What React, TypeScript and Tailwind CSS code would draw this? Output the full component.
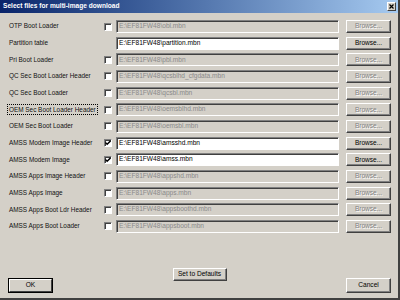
const ROWS = [
  { label: "OTP Boot Loader", path: "E:\\EF81FW48\\obl.mbn", check: true, on: false },
  { label: "Partition table", path: "E:\\EF81FW48\\partition.mbn", check: false, on: true },
  { label: "Pri Boot Loader", path: "E:\\EF81FW48\\pbl.mbn", check: true, on: false },
  { label: "QC Sec Boot Loader Header", path: "E:\\EF81FW48\\qcsblhd_cfgdata.mbn", check: true, on: false },
  { label: "QC Sec Boot Loader", path: "E:\\EF81FW48\\qcsbl.mbn", check: true, on: false },
  { label: "OEM Sec Boot Loader Header", path: "E:\\EF81FW48\\oemsblhd.mbn", check: true, on: false, focus: true },
  { label: "OEM Sec Boot Loader", path: "E:\\EF81FW48\\oemsbl.mbn", check: true, on: false },
  { label: "AMSS Modem Image Header", path: "E:\\EF81FW48\\amsshd.mbn", check: true, on: true },
  { label: "AMSS Modem Image", path: "E:\\EF81FW48\\amss.mbn", check: true, on: true },
  { label: "AMSS Apps Image Header", path: "E:\\EF81FW48\\appshd.mbn", check: true, on: false },
  { label: "AMSS Apps Image", path: "E:\\EF81FW48\\apps.mbn", check: true, on: false },
  { label: "AMSS Apps Boot Ldr Header", path: "E:\\EF81FW48\\appsboothd.mbn", check: true, on: false },
  { label: "AMSS Apps Boot Loader", path: "E:\\EF81FW48\\appsboot.mbn", check: true, on: false },
];

const FONT = { fontFamily: '"Liberation Sans", Arial, sans-serif' };

const RAISED =
  "border border-t-white border-l-white border-b-[#404040] border-r-[#404040] shadow-[inset_-1px_-1px_0_#808080]";
const SUNKEN =
  "border border-t-[#808080] border-l-[#808080] border-b-white border-r-white shadow-[inset_1px_1px_0_#404040]";

function Checkbox({ on }: { on: boolean }) {
  return (
    <div className={`w-[8px] h-[8px] bg-white flex items-center justify-center shrink-0 ${SUNKEN}`}>
      {on && (
        <svg width="6" height="6" viewBox="0 0 7 7">
          <path d="M0.5 3 L2.5 5 L6.5 1" stroke="#000" strokeWidth="1.6" fill="none" />
        </svg>
      )}
    </div>
  );
}

function Browse({ on }: { on: boolean }) {
  return (
    <div
      className={`w-[45px] h-[13px] shrink-0 flex items-center justify-center text-[6.5px] leading-none ${RAISED} ${
        on ? "text-black" : "text-[#808080] [text-shadow:1px_1px_0_#fff]"
      }`}
    >
      Browse...
    </div>
  );
}

export default function App() {
  return (
    <div
      className="w-[400px] h-[300px] bg-[#d4d0c8] flex flex-col border-r-2 border-b-2 border-r-[#404040] border-b-[#404040] overflow-hidden"
      style={FONT}
    >
      {/* Title bar */}
      <div className="h-[13px] shrink-0 flex items-center justify-between pl-[3px] pr-[2px] bg-gradient-to-r from-[#0a246a] to-[#a6caf0]">
        <span className="text-white font-bold text-[6.6px] leading-none">Select files for multi-image download</span>
        <div className="w-[9px] h-[9px] bg-[#d4d0c8] border border-t-white border-l-white border-b-[#404040] border-r-[#404040] flex items-center justify-center">
          <svg width="5" height="5" viewBox="0 0 5 5">
            <path d="M0.5 0.5 L4.5 4.5 M4.5 0.5 L0.5 4.5" stroke="#000" strokeWidth="1.2" />
          </svg>
        </div>
      </div>

      {/* File rows */}
      <div className="flex flex-col gap-y-[3.67px] pt-[7px] pl-[9px] shrink-0">
        {ROWS.map((r) => (
          <div key={r.label} className="flex items-center h-[13px]">
            <div className="w-[95px] shrink-0 text-[6.4px] leading-none text-[#111]">
              <span className={r.focus ? "outline outline-1 outline-dotted outline-black outline-offset-[1px]" : ""}>
                {r.label}
              </span>
            </div>
            <div className="w-[12px] shrink-0">{r.check && <Checkbox on={r.on} />}</div>
            <div
              className={`w-[223px] h-[13px] shrink-0 flex items-center pl-[2px] text-[6.6px] leading-none ${SUNKEN} ${
                r.on ? "bg-white text-black" : "bg-[#d4d0c8] text-[#8a8a8a]"
              }`}
            >
              {r.path}
            </div>
            <div className="w-[7px] shrink-0" />
            <Browse on={r.on} />
          </div>
        ))}
      </div>

      {/* Bottom buttons */}
      <div className="flex justify-between items-end h-[25px] mt-[35px] pl-[8px] pr-[7px] shrink-0 text-[6.6px] leading-none">
        <div className="w-[45px] h-[15px] border border-black">
          <div className="w-full h-full flex items-center justify-center border border-t-white border-l-white border-b-[#404040] border-r-[#404040]">
            OK
          </div>
        </div>
        <div className={`self-start w-[54px] h-[13px] flex items-center justify-center ${RAISED}`}>
          Set to Defaults
        </div>
        <div className={`w-[45px] h-[15px] flex items-center justify-center ${RAISED}`}>
          Cancel
        </div>
      </div>
    </div>
  );
}
